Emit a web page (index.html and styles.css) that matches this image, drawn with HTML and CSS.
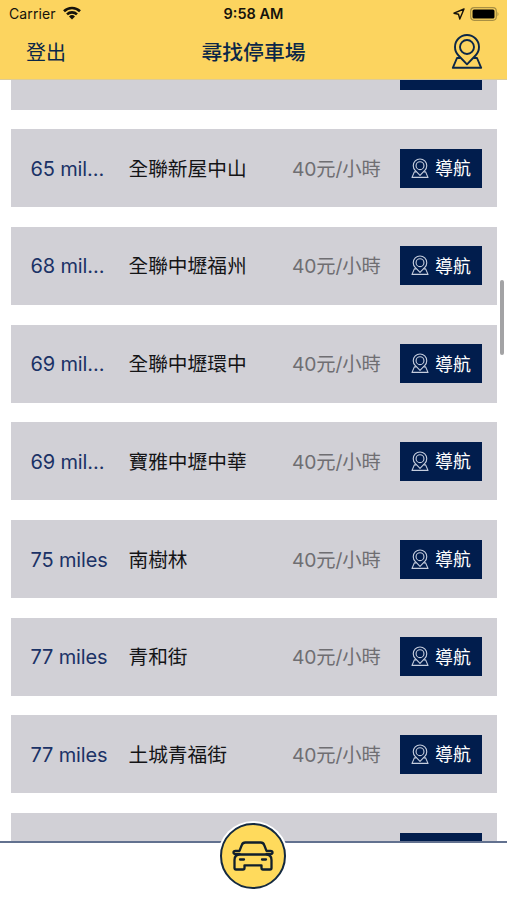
FILE: index.html
```html
<!DOCTYPE html>
<html lang="zh-Hant">
<head>
    <meta charset="UTF-8">
    <title>尋找停車場</title>
    <link rel="stylesheet" href="styles.css">
</head>
<body>
    <svg class="symbols">
        <symbol id="pin" viewBox="0 0 32 36">
            <path d="M16 30.300 L7.500 21.500 A12 12 0 1 1 24.500 21.500 Z"/>
            <circle cx="16" cy="13" r="7"/>
            <path d="M9.500 24 H6 L1.800 33.800 H30.200 L26 24 H22.500"/>
        </symbol>
    </svg>

    <header class="header">
        <div class="status-bar">
            <div class="carrier">
                <span>Carrier</span>
                <svg class="wifi" viewBox="0 0 18 14">
                    <path d="M1 5.200 A11.500 11.500 0 0 1 17 5.200"/>
                    <path d="M4 8.400 A7.200 7.200 0 0 1 14 8.400"/>
                    <path class="dot" d="M9 13.500 L6 10.500 A4.300 4.300 0 0 1 12 10.500 Z"/>
                </svg>
            </div>
            <span class="time">9:58 AM</span>
            <div class="indicators">
                <svg class="location" viewBox="0 0 12 12">
                    <path d="M11 1 L1 5.200 L5.500 6.300 L6.800 11 Z"/>
                </svg>
                <svg class="battery" viewBox="0 0 30 14">
                    <rect class="battery-case" x="0.700" y="0.700" width="25.600" height="12.600" rx="3.500"/>
                    <rect x="2.500" y="2.500" width="22" height="9" rx="1.500"/>
                    <path class="battery-tip" d="M27.500 4.700 Q29.500 7 27.500 9.300 Z"/>
                </svg>
            </div>
        </div>
        <div class="nav-bar">
            <a class="logout">登出</a>
            <h1>尋找停車場</h1>
            <svg class="map-icon"><use href="#pin"/></svg>
        </div>
    </header>

    <main class="content">
        <div class="list">
            <div class="row">
                <span class="distance">65 mil…</span>
                <span class="name">全聯新屋中正</span>
                <span class="price">40元/小時</span>
                <button class="navigate"><svg><use href="#pin"/></svg><span>導航</span></button>
            </div>
            <div class="row">
                <span class="distance">65 mil…</span>
                <span class="name">全聯新屋中山</span>
                <span class="price">40元/小時</span>
                <button class="navigate"><svg><use href="#pin"/></svg><span>導航</span></button>
            </div>
            <div class="row">
                <span class="distance">68 mil…</span>
                <span class="name">全聯中壢福州</span>
                <span class="price">40元/小時</span>
                <button class="navigate"><svg><use href="#pin"/></svg><span>導航</span></button>
            </div>
            <div class="row">
                <span class="distance">69 mil…</span>
                <span class="name">全聯中壢環中</span>
                <span class="price">40元/小時</span>
                <button class="navigate"><svg><use href="#pin"/></svg><span>導航</span></button>
            </div>
            <div class="row">
                <span class="distance">69 mil…</span>
                <span class="name">寶雅中壢中華</span>
                <span class="price">40元/小時</span>
                <button class="navigate"><svg><use href="#pin"/></svg><span>導航</span></button>
            </div>
            <div class="row">
                <span class="distance">75 miles</span>
                <span class="name">南樹林</span>
                <span class="price">40元/小時</span>
                <button class="navigate"><svg><use href="#pin"/></svg><span>導航</span></button>
            </div>
            <div class="row">
                <span class="distance">77 miles</span>
                <span class="name">青和街</span>
                <span class="price">40元/小時</span>
                <button class="navigate"><svg><use href="#pin"/></svg><span>導航</span></button>
            </div>
            <div class="row">
                <span class="distance">77 miles</span>
                <span class="name">土城青福街</span>
                <span class="price">40元/小時</span>
                <button class="navigate"><svg><use href="#pin"/></svg><span>導航</span></button>
            </div>
            <div class="row">
                <span class="distance"></span>
                <span class="name"></span>
                <span class="price"></span>
                <button class="navigate"></button>
            </div>
        </div>
        <div class="scrollbar"></div>
    </main>

    <footer class="tab-bar">
        <button class="car-button">
            <svg viewBox="0 0 42 30">
                <path d="M7.500 13 H3.500 Q1.500 13 1.500 11.500 Q1.500 9.800 3.500 9.800 H7.500 L9.800 4 Q10.700 1.500 13.300 1.500 H28.700 Q31.300 1.500 32.200 4 L34.500 9.800 H38.500 Q40.500 9.800 40.500 11.500 Q40.500 13 38.500 13 H34.500"/>
                <path d="M8 13.500 H34 Q39.500 13.500 39.500 19 V27 Q39.500 28.500 38 28.500 H31 Q29.500 28.500 29.500 27 V24.300 H12.500 V27 Q12.500 28.500 11 28.500 H4 Q2.500 28.500 2.500 27 V19 Q2.500 13.500 8 13.500 Z"/>
                <path d="M8 18.500 H12 M30 18.500 H34"/>
            </svg>
        </button>
    </footer>
</body>
</html>
```
FILE: styles.css
```css
* {
    box-sizing: border-box;
}

body {
    display: flex;
    flex-direction: column;
    height: 100vh;
    margin: 0;
    overflow: hidden;
    background: #fff;
    font-family: Inter, "Noto Sans CJK TC", sans-serif;
    color: #0b2748;
}

svg {
    fill: none;
    stroke: currentColor;
    stroke-linejoin: round;
    flex-shrink: 0;
}

.symbols {
    position: absolute;
    width: 0;
    height: 0;
}

.header {
    flex: 0 0 80px;
    border-bottom: 1px solid #dccb98;
    background: #fcd45f;
}

.status-bar {
    display: grid;
    grid-template-columns: 1fr auto 1fr;
    align-items: center;
    height: 27px;
    padding: 0 7px 0 9px;
    font-size: 14px;
    color: #15130c;
}

.carrier,
.indicators {
    display: flex;
    align-items: center;
}

.carrier {
    gap: 7px;
    letter-spacing: 0.1px;
}

.indicators {
    justify-content: flex-end;
    gap: 5px;
}

.wifi {
    width: 18px;
    height: 14px;
    margin-top: -2px;
    stroke-width: 2.600;
}

.wifi .dot {
    fill: currentColor;
    stroke: none;
}

.time {
    margin-right: 2px;
    font-size: 14.500px;
    font-weight: 600;
}

.location {
    width: 12px;
    height: 12px;
    stroke-width: 1.400;
}

.battery {
    width: 30px;
    height: 14px;
    fill: #000;
    stroke: none;
}

.battery-case {
    fill: none;
    stroke: #a88f43;
    stroke-width: 1.200;
}

.battery-tip {
    fill: #a88f43;
}

.nav-bar {
    display: grid;
    grid-template-columns: 1fr auto 1fr;
    align-items: center;
    height: 50px;
    padding: 0 24px 0 26px;
}

.logout {
    margin-top: 2px;
    font-size: 20px;
    line-height: 30px;
}

h1 {
    margin: 2px 2px 0 0;
    font-size: 20.800px;
    font-weight: 500;
    line-height: 30px;
}

.map-icon {
    width: 32px;
    height: 36px;
    justify-self: end;
    stroke-width: 1.900;
}

.content {
    position: relative;
    flex: 1;
    overflow: hidden;
}

.list {
    display: flex;
    flex-direction: column;
    gap: 19.700px;
    margin: -48.400px 10px 0 11px;
}

.row {
    display: grid;
    grid-template-columns: 78px 143.500px 88.500px 82px;
    column-gap: 20px;
    align-items: center;
    height: 78px;
    padding-left: 19.500px;
    background: #d1d0d6;
    font-size: 19.700px;
    line-height: 30px;
    white-space: nowrap;
}

.row > span {
    margin-top: 1px;
}

.row:first-child span {
    margin-top: -3px;
}

.distance {
    font-size: 20px;
    letter-spacing: -0.150px;
    color: #1b3266;
}

.name {
    color: #141416;
}

.price {
    font-size: 19.300px;
    letter-spacing: -0.150px;
    color: #6f6e72;
}

.navigate {
    display: flex;
    align-items: center;
    justify-content: center;
    gap: 6px;
    width: 82px;
    height: 39px;
    margin-left: -0.500px;
    padding: 0;
    border: none;
    background: #011d4d;
    color: #fff;
    font: 18px "Noto Sans CJK TC", sans-serif;
}

.navigate span {
    margin-top: -2px;
}

.navigate svg {
    width: 18px;
    height: 21px;
    stroke-width: 2;
    color: #c5cddd;
}

.scrollbar {
    position: absolute;
    top: 200px;
    right: 3px;
    width: 4px;
    height: 75px;
    border-radius: 2px;
    background: #a3a3a5;
}

.tab-bar {
    position: relative;
    display: flex;
    justify-content: center;
    flex: 0 0 59px;
    border-top: 2px solid #62718f;
    background: #fff;
}

.car-button {
    width: 66px;
    height: 66px;
    margin: -20px 1px 0 0;
    padding: 0;
    display: flex;
    align-items: center;
    justify-content: center;
    border: 2px solid #142a40;
    border-radius: 50%;
    background: #ffda5c;
    box-shadow: 0 0 0 2px #fff;
    color: #101f2c;
}

.car-button svg {
    width: 42px;
    height: 30px;
    stroke-width: 2.300;
    stroke-linecap: round;
}
```
